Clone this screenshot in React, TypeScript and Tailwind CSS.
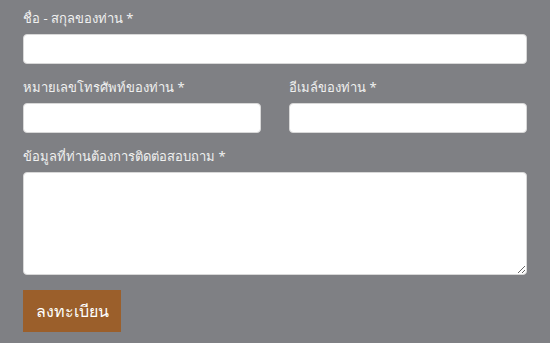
export default function App() {
  const inputCls = 'block w-full h-[30px] rounded-[4px] bg-white border border-[#d8d8d8] outline-none px-2 text-sm';
  const labelCls = 'block text-[13px] leading-[18px] text-[#f0f0f0] mb-[7px]';

  return (
    <div
      className="w-[550px] h-[343px] bg-[#7f8084] px-[23px] pt-[9px]"
      style={{ fontFamily: 'Tahoma, "Noto Sans", "DejaVu Sans", sans-serif' }}
    >
      <form className="flex flex-col" onSubmit={(e) => e.preventDefault()}>
        <div className="mb-[14px]">
          <label className={labelCls}>ชื่อ - สกุลของท่าน *</label>
          <input type="text" className={inputCls} />
        </div>

        <div className="grid grid-cols-2 gap-[28px] mb-[14px]">
          <div>
            <label className={labelCls}>หมายเลขโทรศัพท์ของท่าน *</label>
            <input type="text" className={inputCls} />
          </div>
          <div>
            <label className={labelCls}>อีเมล์ของท่าน *</label>
            <input type="email" className={inputCls} />
          </div>
        </div>

        <div className="mb-[15px]">
          <label className={labelCls}>ข้อมูลที่ท่านต้องการติดต่อสอบถาม *</label>
          <textarea className="block w-full h-[103px] rounded-[4px] bg-white border border-[#d8d8d8] outline-none px-2 py-1 text-sm" />
        </div>

        <div>
          <button
            type="submit"
            className="w-[98px] h-[42px] bg-[#9b5f2b] text-white text-[16px]"
          >
            ลงทะเบียน
          </button>
        </div>
      </form>
    </div>
  );
}
